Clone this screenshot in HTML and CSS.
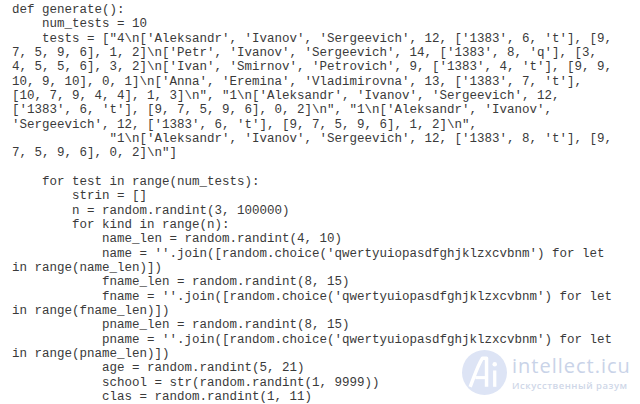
FILE: index.html
```html
<!DOCTYPE html>
<html lang="en">
<head>
<meta charset="utf-8">
<title>generate</title>
<link rel="stylesheet" href="styles.css">
</head>
<body>
<div class="page">
<pre class="code"><span class="ln">def generate():</span><span class="ln">    num_tests = 10</span><span class="ln">    tests = ["4\n['Aleksandr', 'Ivanov', 'Sergeevich', 12, ['1383', 6, 't'], [9,</span><span class="ln">7, 5, 9, 6], 1, 2]\n['Petr', 'Ivanov', 'Sergeevich', 14, ['1383', 8, 'q'], [3,</span><span class="ln">4, 5, 5, 6], 3, 2]\n['Ivan', 'Smirnov', 'Petrovich', 9, ['1383', 4, 't'], [9, 9,</span><span class="ln">10, 9, 10], 0, 1]\n['Anna', 'Eremina', 'Vladimirovna', 13, ['1383', 7, 't'],</span><span class="ln">[10, 7, 9, 4, 4], 1, 3]\n", "1\n['Aleksandr', 'Ivanov', 'Sergeevich', 12,</span><span class="ln">['1383', 6, 't'], [9, 7, 5, 9, 6], 0, 2]\n", "1\n['Aleksandr', 'Ivanov',</span><span class="ln">'Sergeevich', 12, ['1383', 6, 't'], [9, 7, 5, 9, 6], 1, 2]\n",</span><span class="ln">             "1\n['Aleksandr', 'Ivanov', 'Sergeevich', 12, ['1383', 8, 't'], [9,</span><span class="ln">7, 5, 9, 6], 0, 2]\n"]</span><span class="ln"> </span><span class="ln">    for test in range(num_tests):</span><span class="ln">        strin = []</span><span class="ln">        n = random.randint(3, 100000)</span><span class="ln">        for kind in range(n):</span><span class="ln">            name_len = random.randint(4, 10)</span><span class="ln">            name = ''.join([random.choice('qwertyuiopasdfghjklzxcvbnm') for let</span><span class="ln">in range(name_len)])</span><span class="ln">            fname_len = random.randint(8, 15)</span><span class="ln">            fname = ''.join([random.choice('qwertyuiopasdfghjklzxcvbnm') for let</span><span class="ln">in range(fname_len)])</span><span class="ln">            pname_len = random.randint(8, 15)</span><span class="ln">            pname = ''.join([random.choice('qwertyuiopasdfghjklzxcvbnm') for let</span><span class="ln">in range(pname_len)])</span><span class="ln">            age = random.randint(5, 21)</span><span class="ln">            school = str(random.randint(1, 9999))</span><span class="ln">            clas = random.randint(1, 11)</span></pre>
<div class="watermark">
  <svg class="wm-logo" width="45" height="45" viewBox="0 0 44 44">
    <circle cx="22" cy="22" r="22" fill="#dde4f5"/>
    <path d="M8 36 C12 26 15 16 20 8 L24 8 L24 36" fill="none" stroke="#ffffff" stroke-width="3.4" stroke-linejoin="round"/>
    <path d="M13 27 L24 27" stroke="#ffffff" stroke-width="3"/>
    <circle cx="32" cy="14" r="2.2" fill="#ffffff"/>
    <path d="M32 20 L32 36" stroke="#ffffff" stroke-width="3.2"/>
  </svg>
  <div class="wm-text">
    <div class="wm-title">intellect.icu</div>
    <div class="wm-sub">Искусственный разум</div>
  </div>
</div>
</div>
</body>
</html>
```
FILE: styles.css
```css
html, body {
  margin: 0;
  padding: 0;
  background: #ffffff;
}
.page {
  position: relative;
  width: 640px;
  height: 404px;
  overflow: hidden;
}
.code {
  margin: 0;
  padding: 3px 0 0 12px;
  display: flex;
  flex-direction: column;
  align-items: flex-start;
  font-family: "Liberation Mono", "Courier New", monospace;
  font-size: 12.5px;
  line-height: 14.33px;
  color: #3a3a3a;
}
.ln {
  display: block;
  height: 14.33px;
  white-space: pre;
}
.watermark {
  position: absolute;
  left: 462px;
  top: 350px;
  display: flex;
  align-items: flex-start;
  gap: 5px;
}
.wm-text {
  display: flex;
  flex-direction: column;
  padding-top: 5px;
  font-family: "Open Sans", "Noto Sans", sans-serif;
}
.wm-title {
  font-size: 20px;
  line-height: 22px;
  color: #c9d3e8;
  letter-spacing: 1px;
}
.wm-sub {
  margin-top: 3px;
  font-size: 9.5px;
  line-height: 12px;
  font-weight: 600;
  color: #cfd7e8;
  letter-spacing: 0.5px;
}
```
